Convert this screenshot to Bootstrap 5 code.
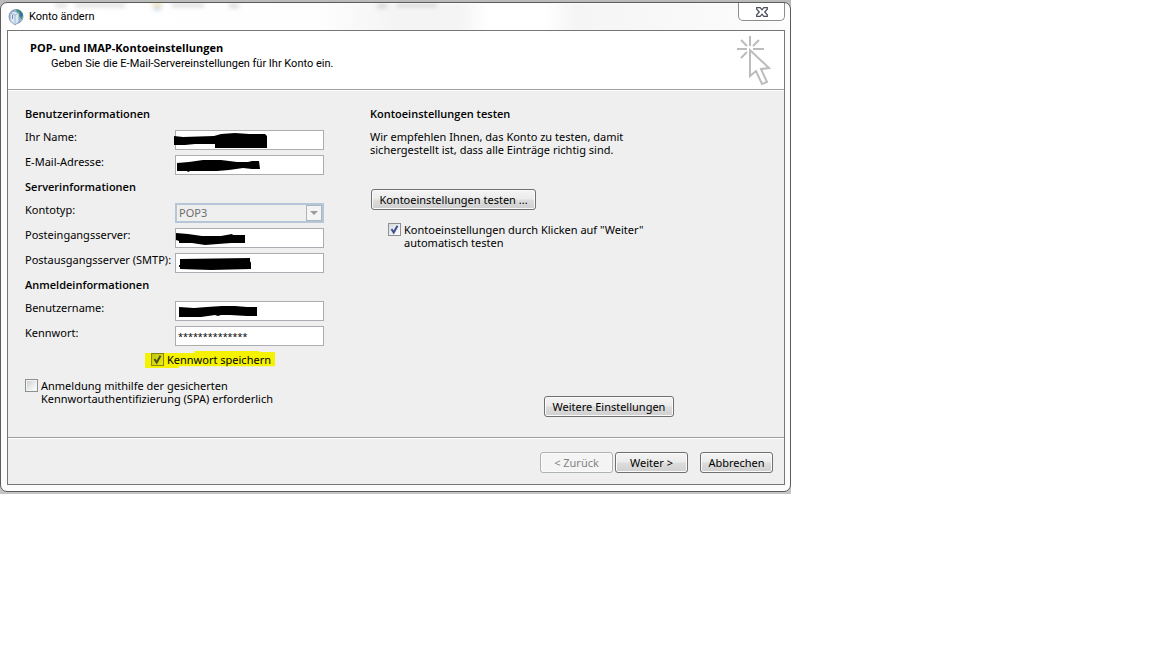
<!DOCTYPE html>
<html lang="de">
<head>
<meta charset="utf-8">
<meta name="viewport" content="width=device-width, initial-scale=1">
<title>Konto ändern</title>
<link href="https://cdn.jsdelivr.net/npm/bootstrap@5.3.0/dist/css/bootstrap.min.css" rel="stylesheet">
<style>
  body { font-family: "Noto Sans", "Open Sans", sans-serif; font-size: 11px; line-height: 13px; color: #000; background: #fff; }
  .stage { max-width: 791px; padding: 2px 0 2px; background: linear-gradient(#b9bcb9 0 20px, #c4c4c4 20px); }
  .window-frame { border: 1px solid #5c5c5c; border-radius: 7px; background: #fcfcfc; padding: 0 5px 6px 6px; }
  .title-strip { height: 27px; }
  .title-strip .haze { left: 0; top: 0; width: 100%; height: 27px; z-index: 0; }
  .caption-text { font-family: Roboto, sans-serif; line-height: 14px; z-index: 1; }
  .close-btn { width: 47px; height: 18px; border: 1px solid #8c8c8c; border-top: 0; border-radius: 0 0 5px 5px; background: #fff; }
  .client { border: 1px solid #767676; background: #efefef; }
  .banner { background: #fff; border-bottom: 1px solid #a0a0a0; padding: 10px 12px 0 22px; height: 59px; }
  .banner h1, .group-title { font-size: 11px; line-height: 14px; font-weight: 700; margin: 0; font-family: "Open Sans", sans-serif; }
  .banner p { font-family: Roboto, sans-serif; line-height: 14px; margin: 2px 0 0 21px; }
  .pointer-art { margin-top: -5px; }
  .form-area { padding: 16px 0 20px 17px; border-top: 1px solid #fff; }
  .left-side { flex: 0 0 345px; }
  .group-title { font-weight: 600; margin-bottom: 9px; }
  .field { margin-bottom: 5px; height: 20px; }
  .field > label { width: 150px; line-height: 14px; white-space: nowrap; }
  .field-box { width: 149px; }
  .field-box .form-control, .field-box .form-select { height: 20px; min-height: 0; padding: 0 3px; font-size: 11px; line-height: 18px; border: 1px solid #abadb3; border-radius: 0; color: #000; background-color: #fff; }
  .field-box .form-control.secret { font-size: 9px; padding: 0 2px; }
  .field-box .form-select:disabled { border: 2px solid #b5c7d6; background: #efefef; color: #6d6d6d; padding: 0 2px; line-height: 16px; opacity: 1; }
  .drop-arrow { right: 2px; top: 2px; width: 16px; height: 16px; border: 1px solid #adb5bd; background: #f4f4f4; pointer-events: none; }
  .scribble { left: -3px; top: 0; width: 104px; height: 20px; pointer-events: none; }
  .tick { appearance: none; flex: none; width: 13px; height: 13px; margin: 0; border: 1px solid #8e8f8f; border-radius: 0; background: linear-gradient(135deg, #cdd1d6, #fff) center / 9px 9px no-repeat #f4f4f4; }
  .tick:checked { background: url("data:image/svg+xml,%3Csvg xmlns='http://www.w3.org/2000/svg' viewBox='0 0 11 11'%3E%3Cpath d='M2.5 5L4.7 8.5L8.5 1.7' fill='none' stroke='%233e4f91' stroke-width='2'/%3E%3C/svg%3E") center / 11px 11px no-repeat, linear-gradient(135deg, #d5dbe2, #fff); }
  .marked { margin-left: 120px; width: 130px; height: 17px; padding-left: 6px; gap: 3px; background: #f4f200; clip-path: polygon(0 12%, 38% 12%, 38% 0, 88% 0, 88% 6%, 100% 6%, 100% 90%, 26% 90%, 26% 100%, 0 100%); }
  .marked .tick:checked { border-color: #85850f; background: url("data:image/svg+xml,%3Csvg xmlns='http://www.w3.org/2000/svg' viewBox='0 0 11 11'%3E%3Cpath d='M2.5 5L4.7 8.5L8.5 1.7' fill='none' stroke='%234c5210' stroke-width='2'/%3E%3C/svg%3E") center / 11px 11px no-repeat, linear-gradient(135deg, #c2c412, #ecec10); }
  .spa { margin: 11px 0 12px; gap: 3px; }
  .push { height: 21px; padding: 0 7px; font-size: 11px; line-height: 17px; color: #000; border: 1px solid #707070; border-radius: 3px; background: linear-gradient(#f4f4f4 0, #ebebeb 48%, #dddddd 52%, #cfcfcf 100%); box-shadow: inset 0 0 0 1px #fafafa; white-space: nowrap; }
  .push:disabled { color: #838383; border-color: #adb2b5; background: #f4f4f4; opacity: 1; }
  .test-btn { margin: 33px 0 0 1px; width: 165px; }
  .auto-test { margin: 13px 0 0 18px; gap: 3px; }
  .more-btn { margin-right: 110px; width: 130px; }
  .push-nav { width: 73px; padding: 0; }
  .next-btn { margin: 0 12px 0 2px; }
  .foot { border-top: 1px solid #a0a0a0; box-shadow: inset 0 1px #fff; padding: 14px 11px 11px; }
</style>
</head>
<body>
<main class="stage">
  <div class="window-frame">
    <header class="title-strip d-flex align-items-center justify-content-between position-relative">
      <svg class="haze position-absolute" aria-hidden="true" preserveAspectRatio="none" viewBox="0 0 778 27">
        <defs>
          <filter id="soft" x="-30%" y="-100%" width="160%" height="300%"><feGaussianBlur stdDeviation="2"/></filter>
          <linearGradient id="sheen"><stop offset="0" stop-color="#fff"/><stop offset=".4" stop-color="#fefefe"/><stop offset=".5" stop-color="#f4f4f4"/><stop offset=".58" stop-color="#f4f4f4"/><stop offset=".62" stop-color="#fff"/><stop offset=".69" stop-color="#fff"/><stop offset=".73" stop-color="#f5f5f5"/><stop offset="1" stop-color="#fcfcfc"/></linearGradient>
        </defs>
        <path fill="url(#sheen)" d="M0 1h778v26H0z"/>
        <g filter="url(#soft)" fill="#bbb" opacity=".6">
          <path d="M48 1h12v3H48zM68 1h50v3H68zM165 1h32v3h-32zM222 1h10v4h-10zM370 1h10v4h-10zM390 1h40v3h-40z"/>
          <path fill="#d8c86a" d="M145 0h10v3h-10z"/><path fill="#91aec5" d="M147 4h7v3h-7z"/>
        </g>
      </svg>
      <div class="d-flex align-items-center gap-1 caption-text">
        <svg width="18" height="18" viewBox="0 0 18 18" aria-hidden="true">
          <circle cx="9" cy="8.500" r="7" fill="#9dbcd8" stroke="#7f9cbc"/>
          <path d="M9 1.500q5-.5 7 5l-1.500 5-3.500-5z" fill="#3d9276"/>
          <path d="M12.500 3l3.500 4-2 2z" fill="#286caa"/>
          <path d="M3 5l4-2 5 2v9l-4 3-5-4z" fill="#dce8f4" stroke="#7d93b8" stroke-width=".8"/>
          <path d="M3 5l5 2v10M8 7l4-2" stroke="#96a9c9" stroke-width=".8" fill="none"/>
          <path d="M5.500 7v4" stroke="#7189b0"/>
        </svg>
        <span>Konto ändern</span>
      </div>
      <button type="button" class="close-btn p-0 d-flex align-items-center justify-content-center align-self-start position-relative" aria-label="Schließen">
        <svg width="12" height="10" viewBox="0 0 12 10" aria-hidden="true"><path d="M.7.7h3.500L6 2.800 7.800.700h3.500v1.500L8.700 5l2.600 2.800v1.500H7.800L6 7.200 4.200 9.300H.7V7.800L3.300 5 .7 2.200z" fill="#fff" stroke="#4a4d5b" stroke-width="1.200"/></svg>
      </button>
    </header>

    <form class="client" onsubmit="return false">
      <div class="banner d-flex justify-content-between">
        <div>
          <h1>POP- und IMAP-Kontoeinstellungen</h1>
          <p>Geben Sie die E-Mail-Servereinstellungen für Ihr Konto ein.</p>
        </div>
        <svg class="pointer-art flex-shrink-0" width="36" height="50" viewBox="0 0 36 50" fill="none" stroke="#bcbcbc" stroke-width="2" aria-hidden="true">
          <path d="M14 0v10M1 13h10M17 13h11M5 4l6 6M23 4l-6 6M5 22l6-6"/>
          <path d="M14 14v26l6-5 6 13 5-2-6-13 8-1z"/>
        </svg>
      </div>

      <div class="form-area d-flex">
        <section class="left-side">
          <h2 class="group-title">Benutzerinformationen</h2>
          <div class="field d-flex"><label for="name">Ihr Name:</label>
            <div class="field-box position-relative"><input class="form-control" id="name" type="text">
              <svg class="scribble position-absolute" viewBox="0 0 104 20" aria-hidden="true"><path d="M2 6l9 1 31-1 7-2 14-1 14 1 16 0 2 2v12H43v-4l-20 0-10 1H2z"/></svg></div></div>
          <div class="field d-flex"><label for="mail">E-Mail-Adresse:</label>
            <div class="field-box position-relative"><input class="form-control" id="mail" type="text">
              <svg class="scribble position-absolute" viewBox="0 0 104 20" aria-hidden="true"><path d="M5 8l12-1 14-2h18l16 2 11 0 4-1 7 0 1 8-8 0-9-1-14 2-12 1-20 0-7 0-2 1-1-1H5z"/></svg></div></div>
          <h2 class="group-title">Serverinformationen</h2>
          <div class="field d-flex"><label for="type">Kontotyp:</label>
            <div class="field-box position-relative"><select class="form-select" id="type" disabled><option>POP3</option></select>
              <span class="drop-arrow position-absolute d-flex align-items-center justify-content-center"><svg width="8" height="4" viewBox="0 0 8 4" aria-hidden="true"><path d="M0 0h8L4 4z" fill="#9b9b9b"/></svg></span></div></div>
          <div class="field d-flex"><label for="pop">Posteingangsserver:</label>
            <div class="field-box position-relative"><input class="form-control" id="pop" type="text">
              <svg class="scribble position-absolute" viewBox="0 0 104 20" aria-hidden="true"><path d="M4 5l12 1 14 2 19 0 11-2 1 1 12 0v8H59l-13 1-13 1-13-2-13 0v-2l-3-1z"/></svg></div></div>
          <div class="field d-flex"><label for="smtp">Postausgangsserver (SMTP):</label>
            <div class="field-box position-relative"><input class="form-control" id="smtp" type="text">
              <svg class="scribble position-absolute" viewBox="0 0 104 20" aria-hidden="true"><path d="M8 6l70-1v3l1 2v6l-40 1-31-1v-2l-1 0v-2h1z"/></svg></div></div>
          <h2 class="group-title">Anmeldeinformationen</h2>
          <div class="field d-flex"><label for="user">Benutzername:</label>
            <div class="field-box position-relative"><input class="form-control" id="user" type="text">
              <svg class="scribble position-absolute" viewBox="0 0 104 20" aria-hidden="true"><path d="M7 6l15 1 13-1 15-1 13 0 12 1 10 0v9l-10 0-17-1-9 0-3 1-3-1-14 2-22 0z"/></svg></div></div>
          <div class="field d-flex"><label for="pass">Kennwort:</label>
            <div class="field-box position-relative"><input class="form-control secret" id="pass" type="text" value="**************"></div></div>
          <label class="marked d-flex align-items-center"><input class="tick" type="checkbox" checked><span>Kennwort speichern</span></label>
          <label class="d-flex spa"><input class="tick" type="checkbox"><span>Anmeldung mithilfe der gesicherten<br>Kennwortauthentifizierung (SPA) erforderlich</span></label>
        </section>

        <section class="d-flex flex-column align-items-start flex-grow-1">
          <h2 class="group-title">Kontoeinstellungen testen</h2>
          <p class="mb-0 text-nowrap">Wir empfehlen Ihnen, das Konto zu testen, damit<br>sichergestellt ist, dass alle Einträge richtig sind.</p>
          <button type="button" class="btn push test-btn">Kontoeinstellungen testen ...</button>
          <label class="d-flex auto-test"><input class="tick" type="checkbox" checked><span>Kontoeinstellungen durch Klicken auf "Weiter"<br>automatisch testen</span></label>
          <button type="button" class="btn push more-btn align-self-end mt-auto">Weitere Einstellungen</button>
        </section>
      </div>

      <footer class="foot d-flex justify-content-end">
        <button type="button" class="btn push push-nav" disabled>&lt; Zurück</button>
        <button type="button" class="btn push push-nav next-btn">Weiter &gt;</button>
        <button type="button" class="btn push push-nav">Abbrechen</button>
      </footer>
    </form>
  </div>
</main>
<script src="https://cdn.jsdelivr.net/npm/bootstrap@5.3.0/dist/js/bootstrap.bundle.min.js"></script>
</body>
</html>
